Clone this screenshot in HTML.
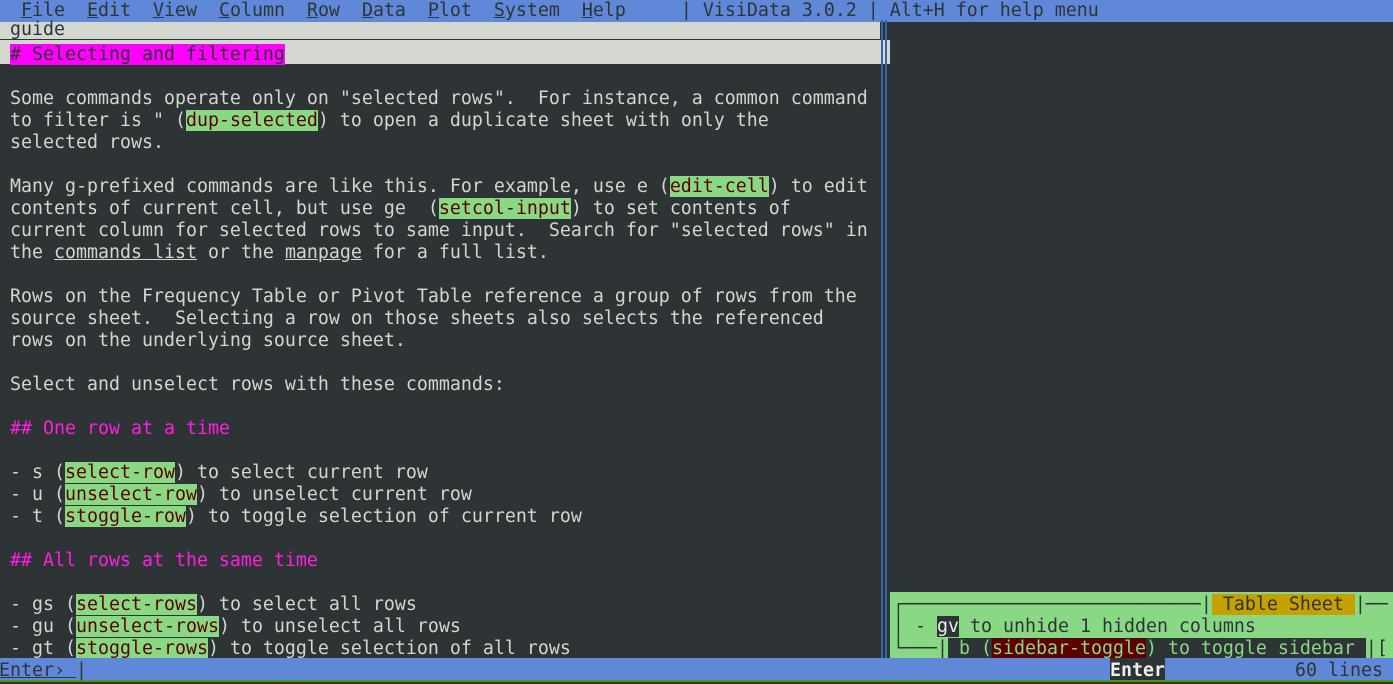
<!DOCTYPE html>
<html><head><meta charset="utf-8"><style>
body{margin:0;width:1393px;height:682px;background:#2e3436;overflow:hidden;position:relative;font-family:"DejaVu Sans Mono","Liberation Mono",monospace;font-size:18.27px;color:#d3d7cf}
.r{position:absolute;left:-1px;height:22px;line-height:26px;white-space:pre;margin:0}
.h{background:#88d884;color:#5c0000}
.m{color:#ff1ee0}
u{text-decoration:underline}
</style></head><body>
<div style="position:absolute;left:0;top:0;width:1393px;height:22px;background:#5f88d8"></div>
<div class="r" style="top:-2px;color:#2e3436">  <u>F</u>ile  <u>E</u>dit  <u>V</u>iew  <u>C</u>olumn  <u>R</u>ow  <u>D</u>ata  <u>P</u>lot  <u>S</u>ystem  <u>H</u>elp     | VisiData 3.0.2 | Alt+H for help menu</div>
<div style="position:absolute;left:0;top:22px;width:880px;height:17px;background:#d3d7cf;border-bottom:1px solid #2e3436"></div>
<div style="position:absolute;left:0;top:40px;width:890px;height:24px;background:#d3d7cf"></div>
<div class="r" style="top:17px;color:#2e3436"> guide</div>
<div class="r" style="top:42px;color:#2e3436"> <span style="background:#ff00ff">#&nbsp;Selecting and filtering</span></div>
<div style="position:absolute;left:881px;top:20px;width:2px;height:638px;background:#3465a4"></div>
<div style="position:absolute;left:885px;top:20px;width:2px;height:638px;background:#3465a4"></div>
<div class="r" style="top:86px"> Some commands operate only on "selected rows".  For instance, a common command</div>
<div class="r" style="top:108px"> to filter is " (<span class="h">dup-selected</span>) to open a duplicate sheet with only the</div>
<div class="r" style="top:130px"> selected rows.</div>
<div class="r" style="top:174px"> Many g-prefixed commands are like this. For example, use e (<span class="h">edit-cell</span>) to edit</div>
<div class="r" style="top:196px"> contents of current cell, but use ge  (<span class="h">setcol-input</span>) to set contents of</div>
<div class="r" style="top:218px"> current column for selected rows to same input.  Search for "selected rows" in</div>
<div class="r" style="top:240px"> the <u>commands list</u> or the <u>manpage</u> for a full list.</div>
<div class="r" style="top:284px"> Rows on the Frequency Table or Pivot Table reference a group of rows from the</div>
<div class="r" style="top:306px"> source sheet.  Selecting a row on those sheets also selects the referenced</div>
<div class="r" style="top:328px"> rows on the underlying source sheet.</div>
<div class="r" style="top:372px"> Select and unselect rows with these commands:</div>
<div class="r m" style="top:416px"> ## One row at a time</div>
<div class="r" style="top:460px"> - s (<span class="h">select-row</span>) to select current row</div>
<div class="r" style="top:482px"> - u (<span class="h">unselect-row</span>) to unselect current row</div>
<div class="r" style="top:504px"> - t (<span class="h">stoggle-row</span>) to toggle selection of current row</div>
<div class="r m" style="top:548px"> ## All rows at the same time</div>
<div class="r" style="top:592px"> - gs (<span class="h">select-rows</span>) to select all rows</div>
<div class="r" style="top:614px"> - gu (<span class="h">unselect-rows</span>) to unselect all rows</div>
<div class="r" style="top:636px"> - gt (<span class="h">stoggle-rows</span>) to toggle selection of all rows</div>
<div style="position:absolute;left:890px;top:592px;width:503px;height:66px;background:#88d884"></div>
<div class="r" style="top:592px;left:893px;color:#2e3436">┌───────────────────────────|<span style="background:#c4a000"> Table Sheet </span>|──</div>
<div class="r" style="top:614px;left:893px;color:#2e3436">│ - <span style="background:#2e3436;color:#eeeeec">gv</span> to unhide 1 hidden columns</div>
<div class="r" style="top:636px;left:893px;color:#2e3436">└───|<span style="background:#2e3436;color:#88d884"> b (<span style="background:#5c0000">sidebar-toggle</span>) to toggle sidebar </span>|[</div>
<div style="position:absolute;left:0;top:658px;width:1393px;height:22px;background:#5f88d8"></div>
<div style="position:absolute;left:0;top:680px;width:1393px;height:2px;background:#4e9a06"></div>
<div class="r" style="top:658px;color:#2e3436"><u>Enter› </u>|</div>
<div class="r" style="top:658px;left:1110px;color:#eeeeec;background:#2e3436;font-weight:bold;height:22px">Enter</div>
<div class="r" style="top:658px;left:1295px;color:#2e3436">60 lines</div>
</body></html>
